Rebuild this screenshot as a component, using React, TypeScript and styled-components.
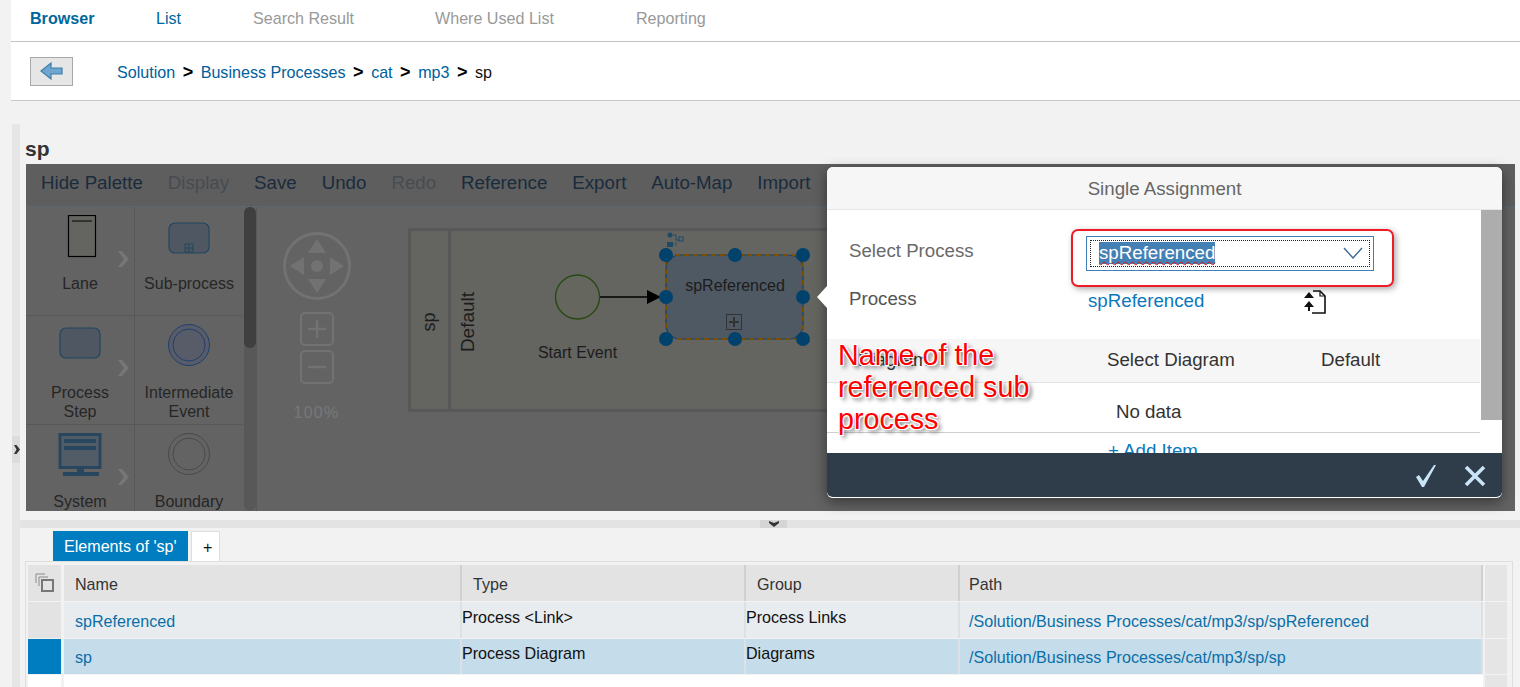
import React from 'react'
import styled, { createGlobalStyle } from 'styled-components'

const GlobalStyle = createGlobalStyle`
  html, body {
    margin: 0;
    padding: 0;
    height: 687px;
    overflow: hidden;
    background: #f2f2f2;
    font-family: "Liberation Sans", Arial, sans-serif;
  }
`

const Page = styled.div`
  width: 1520px;
  height: 687px;
  padding-left: 11px;
  box-sizing: border-box;
  overflow: hidden;
`

const Header = styled.header`
  background: #fff;
  height: 101px;
  box-sizing: border-box;
  border-bottom: 1px solid #c9c9c9;
`

const NavBar = styled.nav`
  display: flex;
  align-items: center;
  height: 42px;
  padding: 0 0 4px 19px;
  box-sizing: border-box;
  border-bottom: 1px solid #c2c2c2;
`

const NavItem = styled.div<{ $width: number; $state?: 'active' | 'link' }>`
  width: ${({ $width }) => $width}px;
  flex: none;
  font-size: 16.1px;
  font-weight: ${({ $state }) => ($state === 'active' ? 700 : 400)};
  color: ${({ $state }) => ($state ? '#00679e' : '#999')};
`

const CrumbBar = styled.div`
  display: flex;
  align-items: center;
  height: 58px;
  padding-left: 19px;
`

const BackButton = styled.button`
  width: 43px;
  height: 29px;
  padding: 0;
  margin-right: 44px;
  display: flex;
  align-items: center;
  justify-content: center;
  background: #e6e6e6;
  border: 1px solid #a8a8a8;
`

const Crumbs = styled.div`
  display: flex;
  align-items: center;
  gap: 7.5px;
  padding-top: 2px;
  font-size: 16.1px;
  color: #00609b;
`

const CrumbSep = styled.span`
  font-weight: 700;
  font-size: 18px;
  line-height: 18px;
  color: #000;
`

const CrumbCurrent = styled.span`
  color: #111;
`

const Main = styled.div`
  display: flex;
  margin-top: 23px;
  height: 563px;
`

const SideStrip = styled.div`
  width: 8px;
  margin-left: 1px;
  flex: none;
  background: #e6e6e6;
  display: flex;
  flex-direction: column;
  padding-top: 312px;
  box-sizing: border-box;
`

const SideHandle = styled.div`
  height: 27px;
  background: #dcdcdc;
  display: flex;
  align-items: center;
  justify-content: center;
  padding-left: 2px;
`

const Content = styled.div`
  flex: 1;
  min-width: 0;
`

const Title = styled.h2`
  margin: 0;
  height: 40px;
  padding: 13px 0 0 5px;
  box-sizing: border-box;
  font-size: 21px;
  line-height: 23px;
  font-weight: 700;
  color: #333;
`

const Panel = styled.section`
  position: relative;
  margin: 0 5px 0 6px;
  height: 347px;
  background: #636363;
  overflow: visible;
`

const Toolbar = styled.div`
  display: flex;
  align-items: center;
  gap: 25px;
  height: 43px;
  padding: 0 0 5px 15px;
  box-sizing: border-box;
  background: #5e5e5e;
  border-bottom: 1px solid #5c6771;
`

const ToolItem = styled.span<{ $disabled?: boolean }>`
  font-size: 18.7px;
  color: ${({ $disabled }) => ($disabled ? '#474c51' : '#1a2b3c')};
`

const Workspace = styled.div`
  display: flex;
  height: 304px;
  overflow: hidden;
`

const Palette = styled.div`
  display: grid;
  grid-template-columns: 109px 108px;
  grid-auto-rows: 109px;
  width: 217px;
  flex: none;
  height: 304px;
  overflow: hidden;
`

const PaletteCell = styled.div<{ $left?: boolean }>`
  position: relative;
  box-sizing: border-box;
  border-bottom: 1px solid #585858;
  border-right: ${({ $left }) => ($left ? '1px solid #585858' : '0')};
  display: flex;
  flex-direction: column;
  align-items: center;
`

const PaletteIcon = styled.svg`
  margin-top: 8px;
  flex: none;
`

const PaletteLabel = styled.div`
  font-size: 16px;
  line-height: 19px;
  color: #262626;
  text-align: center;
  margin-top: 15px;
`

const CellChevron = styled.svg`
  position: absolute;
  right: 3px;
  top: 43px;
`

const PaletteScroll = styled.div`
  width: 12px;
  margin-left: 1px;
  flex: none;
  background: #585858;
  border-radius: 6px;
  height: 304px;
`

const PaletteThumb = styled.div`
  height: 141px;
  background: #3f3f3f;
  border-radius: 6px;
`

const Canvas = styled.div`
  flex: 1;
  min-width: 0;
  display: flex;
  border-left: 1px solid #585858;
`

const Navigator = styled.div`
  width: 119px;
  flex: none;
  display: flex;
  flex-direction: column;
  align-items: center;
  padding-top: 24px;
  box-sizing: border-box;
  color: #787878;
`

const ZoomLabel = styled.div`
  font-size: 16px;
  letter-spacing: 1.3px;
  margin-top: 20px;
`

const ZoomButton = styled.div<{ $gap: number }>`
  width: 34px;
  height: 34px;
  margin-top: ${({ $gap }) => $gap}px;
  box-sizing: border-box;
  border: 2px solid #727272;
  border-radius: 5px;
  display: flex;
  align-items: center;
  justify-content: center;
`

const Diagram = styled.svg`
  flex: none;
  font-family: "Liberation Sans", Arial, sans-serif;
`

const Modal = styled.div`
  position: absolute;
  left: 801px;
  top: 3px;
  width: 675px;
  height: 331px;
  background: #fff;
  border-radius: 6px;
  box-shadow: 0 4px 14px rgba(0, 0, 0, 0.45);
  display: flex;
  flex-direction: column;
`

const ModalArrow = styled.div`
  position: absolute;
  left: -10px;
  top: 119px;
  width: 0;
  height: 0;
  border-top: 11px solid transparent;
  border-bottom: 11px solid transparent;
  border-right: 10px solid #fff;
`

const ModalHeader = styled.div`
  height: 43px;
  flex: none;
  padding-top: 1px;
  background: #f6f6f6;
  border-bottom: 1px solid #e6e6e6;
  border-radius: 6px 6px 0 0;
  box-sizing: border-box;
  display: flex;
  align-items: center;
  justify-content: center;
  font-size: 18.7px;
  color: #666;
`

const ModalBody = styled.div`
  flex: 1;
  min-height: 0;
  display: flex;
  overflow: hidden;
`

const BodyContent = styled.div`
  flex: 1;
  min-width: 0;
`

const FormArea = styled.div`
  height: 129px;
  padding: 26px 0 0 22px;
  box-sizing: border-box;
`

const FieldRow = styled.div<{ $height: number }>`
  display: flex;
  align-items: center;
  height: ${({ $height }) => $height}px;
`

const FieldLabel = styled.div<{ $dark?: boolean }>`
  width: 239px;
  flex: none;
  font-size: 18.7px;
  padding-bottom: ${({ $dark }) => ($dark ? '0' : '6px')};
  color: ${({ $dark }) => ($dark ? '#555' : '#6a6a6a')};
`

const SelectBox = styled.div`
  width: 288px;
  height: 35px;
  box-sizing: border-box;
  border: 1px solid #3f7fb5;
  padding: 3px;
  margin-left: -2px;
`

const SelectInner = styled.div`
  height: 100%;
  box-sizing: border-box;
  border: 1px dotted #222;
  display: flex;
  align-items: center;
  justify-content: space-between;
  padding: 0 6px 2px 8px;
`

const SelectedText = styled.span`
  font-size: 18.7px;
  line-height: 22px;
  background: #4580b4;
  color: #fff;
  text-decoration: underline wavy #e01010 1px;
  text-underline-offset: 2px;
`

const ProcessLink = styled.a`
  font-size: 18.7px;
  padding-top: 4px;
  color: #0a78bd;
  width: 216px;
  flex: none;
`

const ExportIcon = styled.svg`
  margin-top: 6px;
  flex: none;
`

const AssignTable = styled.div`
  font-size: 18.7px;
  color: #333;
`

const AssignHead = styled.div`
  display: grid;
  grid-template-columns: 280px 214px 1fr;
  align-items: center;
  height: 44px;
  box-sizing: border-box;
  background: #f6f6f6;
  border-bottom: 1px solid #e2e2e2;
  padding: 0 0 2px 0;
  width: 653px;
`

const AssignHeadCell = styled.div<{ $indent?: number }>`
  padding-left: ${({ $indent }) => $indent ?? 0}px;
`

const NoData = styled.div`
  height: 50px;
  width: 653px;
  box-sizing: border-box;
  border-bottom: 1px solid #cfcfcf;
  padding: 8px 0 0 289px;
  display: flex;
  align-items: center;
`

const AddItem = styled.div`
  padding: 7px 0 0 281px;
  color: #0a78bd;
`

const ModalScroll = styled.div`
  width: 21px;
  flex: none;
  margin-left: 1px;
`

const ModalThumb = styled.div`
  height: 210px;
  background: #adadad;
`

const ModalFooter = styled.div`
  height: 45px;
  flex: none;
  background: #2f3c49;
  border-bottom: 1px solid #fff;
  border-radius: 0 0 6px 6px;
  display: flex;
  align-items: center;
  justify-content: flex-end;
  gap: 25px;
  padding: 2px 15px 0 0;
  box-sizing: border-box;
`

const RedFrame = styled.div`
  position: absolute;
  left: 244px;
  top: 62px;
  width: 323px;
  height: 58px;
  box-sizing: border-box;
  border: 2px solid #ee1c25;
  border-radius: 7px;
  box-shadow: 2px 2px 6px rgba(0, 0, 0, 0.35);
  pointer-events: none;
`

const Annotation = styled.div`
  position: absolute;
  left: 11px;
  top: 172px;
  font-size: 28.7px;
  line-height: 32px;
  color: #f00;
  text-shadow: 1px 1px 0 #fff, -1px -1px 0 #fff, 1px -1px 0 #fff, -1px 1px 0 #fff, 3px 3px 4px rgba(0, 0, 0, 0.6);
`

const Splitter = styled.div`
  margin-top: 9px;
  height: 8px;
  background: #e3e3e3;
  display: flex;
  justify-content: center;
  padding-left: 7px;
`

const SplitHandle = styled.div`
  width: 27px;
  background: #d5d5d5;
  display: flex;
  align-items: center;
  justify-content: center;
`

const TabRow = styled.div`
  display: flex;
  align-items: flex-end;
  gap: 3px;
  height: 33px;
  padding-left: 33px;
  box-sizing: border-box;
`

const Tab = styled.div<{ $active?: boolean }>`
  height: 30px;
  box-sizing: border-box;
  padding: 1px 11px 0;
  display: flex;
  align-items: center;
  font-size: 16.1px;
  background: ${({ $active }) => ($active ? '#007cc0' : '#fff')};
  color: ${({ $active }) => ($active ? '#fff' : '#111')};
  border: ${({ $active }) => ($active ? '0' : '1px solid #ddd')};
  border-bottom: 0;
  width: ${({ $active }) => ($active ? '135px' : '29px')};
`

const TableFrame = styled.div`
  margin-left: 5px;
  width: 1488px;
  height: 130px;
  box-sizing: border-box;
  border: 1px solid #dedede;
  border-bottom: 0;
  padding: 3px 0 0 2px;
`

const Row = styled.div<{ $height: number; $gapAfter?: number }>`
  display: grid;
  grid-template-columns: 36px 398px 284px 214px 523px 2px 22px;
  height: ${({ $height }) => $height}px;
  margin-bottom: ${({ $gapAfter }) => $gapAfter ?? 1}px;
  font-size: 16.1px;
`

const RowSelector = styled.div<{ $bg: string }>`
  width: 33px;
  background: ${({ $bg }) => $bg};
  display: flex;
  align-items: center;
  justify-content: center;
`

const HeadCell = styled.div<{ $pad?: number }>`
  background: #e3e3e3;
  color: #333;
  display: flex;
  align-items: center;
  padding: 2px 0 0 ${({ $pad }) => $pad ?? 11}px;
  border-right: 2px solid #cfcfcf;
  box-sizing: border-box;
`

const BodyCell = styled.div<{ $selected?: boolean; $top?: boolean; $link?: boolean; $pad?: number }>`
  background: ${({ $selected }) => ($selected ? '#c5dcea' : '#e8ecef')};
  border-right: 2px solid #dde1e4;
  box-sizing: border-box;
  display: flex;
  align-items: ${({ $top }) => ($top ? 'flex-start' : 'center')};
  padding-left: ${({ $top, $pad }) => ($top ? 0 : $pad ?? 11)}px;
  padding-top: ${({ $top, $selected }) => {
    if ($top) return $selected ? '5px' : '6px'
    return $selected ? '1px' : '3px'
  }};
  color: ${({ $link }) => ($link ? '#0a6fa8' : '#111')};
`

const EndCell = styled.div<{ $column: number }>`
  grid-column: ${({ $column }) => $column};
  background: #e5e5e5;
`

const FillCell = styled.div`
  grid-column: span 4;
  background: #fff;
`

const LaneIcon = () => (
  <PaletteIcon width="36" height="44" viewBox="0 0 36 44">
    <rect x="6.5" y="0.5" width="27" height="41" fill="#646461" stroke="#000" strokeWidth="1.2" />
    <line x1="10" y1="6" x2="30" y2="6" stroke="#000" strokeWidth="1" />
  </PaletteIcon>
)

const SubProcessIcon = () => (
  <PaletteIcon width="42" height="44" viewBox="0 0 42 44">
    <rect x="1" y="8" width="40" height="30" rx="6" fill="#4f5862" stroke="#23465f" strokeWidth="1.2" />
    <rect x="17" y="29" width="8" height="8" fill="none" stroke="#23465f" />
    <path d="M21 29v8M17 33h8" stroke="#23465f" />
  </PaletteIcon>
)

const StepIcon = () => (
  <PaletteIcon width="42" height="44" viewBox="0 0 42 44">
    <rect x="1" y="4" width="40" height="30" rx="6" fill="#4f5862" stroke="#23465f" strokeWidth="1.2" />
  </PaletteIcon>
)

const EventIcon = ({ stroke, fill }: { stroke: string; fill: string }) => (
  <PaletteIcon width="44" height="44" viewBox="0 0 44 44">
    <circle cx="22" cy="21" r="20.5" fill={fill} stroke={stroke} />
    <circle cx="22" cy="21" r="16" fill={fill} stroke={stroke} />
  </PaletteIcon>
)

const SystemIcon = () => (
  <PaletteIcon width="44" height="44" viewBox="0 0 44 44">
    <rect x="2" y="1.5" width="40" height="33" fill="#525c66" stroke="#29465f" strokeWidth="3" />
    <rect x="6" y="6" width="32" height="4" fill="#29465f" />
    <rect x="6" y="13" width="32" height="4" fill="#29465f" />
    <rect x="19" y="35" width="7" height="4" fill="#29465f" />
    <rect x="5" y="39" width="36" height="4" fill="#29465f" />
  </PaletteIcon>
)

const Chevron = () => (
  <CellChevron width="14" height="18" viewBox="0 0 14 18">
    <path d="M1 1h4l7 8-7 8H1l6-8z" fill="#767676" />
  </CellChevron>
)

const paletteItems = [
  { label: ['Lane'], icon: <LaneIcon />, left: true },
  { label: ['Sub-process'], icon: <SubProcessIcon /> },
  { label: ['Process', 'Step'], icon: <StepIcon />, left: true },
  { label: ['Intermediate', 'Event'], icon: <EventIcon stroke="#1f4070" fill="#575c68" /> },
  { label: ['System'], icon: <SystemIcon />, left: true },
  { label: ['Boundary'], icon: <EventIcon stroke="#4a4a4a" fill="#636363" /> },
]

const toolItems = [
  { label: 'Hide Palette' },
  { label: 'Display', disabled: true },
  { label: 'Save' },
  { label: 'Undo' },
  { label: 'Redo', disabled: true },
  { label: 'Reference' },
  { label: 'Export' },
  { label: 'Auto-Map' },
  { label: 'Import' },
]

const handles = [
  [666, 255], [735, 255], [803, 255],
  [666, 297], [803, 297],
  [666, 339], [735, 339], [803, 339],
]

// diagram coordinates are page coordinates, the svg is shifted by the viewBox
const ProcessDiagram = () => (
  <Diagram width="500" height="304" viewBox="376 207 500 304">
    <rect x="409.5" y="229.5" width="440" height="181" fill="#646461" stroke="#585858" strokeWidth="3" />
    <line x1="449.5" y1="229" x2="449.5" y2="411" stroke="#585858" strokeWidth="3" />
    <text x="435" y="322" fontSize="18" fill="#1c1c1c" textAnchor="middle" transform="rotate(-90 435 322)">sp</text>
    <text x="474" y="322" fontSize="19" fill="#1c1c1c" textAnchor="middle" transform="rotate(-90 474 322)">Default</text>
    <circle cx="577.5" cy="297" r="22" fill="#65675e" stroke="#274a12" strokeWidth="1.4" />
    <text x="577.5" y="358" fontSize="16" fill="#1c1c1c" textAnchor="middle">Start Event</text>
    <line x1="600" y1="297" x2="650" y2="297" stroke="#000" strokeWidth="1.4" />
    <path d="M647 290l14 7-14 7z" fill="#000" />
    <rect x="666" y="255" width="137" height="84" rx="14" fill="#4f5963" stroke="#1d4058" strokeWidth="1.2" />
    <rect x="666" y="255" width="137" height="84" fill="none" stroke="#7a4d00" strokeWidth="2" strokeDasharray="5 4" />
    <text x="735" y="291" fontSize="16" fill="#1c1c1c" textAnchor="middle">spReferenced</text>
    <rect x="726.5" y="314.5" width="15" height="15" fill="none" stroke="#333" strokeWidth="1" />
    <path d="M734 317v10M729 322h10" stroke="#333" strokeWidth="2" />
    {handles.map(([cx, cy]) => (
      <circle key={`${cx}-${cy}`} cx={cx} cy={cy} r="7" fill="#00426c" />
    ))}
    <circle cx="670" cy="235" r="2.5" fill="#1f4a66" />
    <rect x="667" y="242" width="6" height="5" fill="#1f4a66" />
    <path d="M673 235h3v5h3" fill="none" stroke="#1f4a66" />
    <rect x="679" y="237" width="4" height="4" fill="none" stroke="#1f4a66" />
    <path d="M673 244h3M676 241v6" stroke="#1f4a66" strokeDasharray="1 1" />
  </Diagram>
)

const NavigatorWheel = () => (
  <svg width="70" height="70" viewBox="0 0 70 70">
    <circle cx="35" cy="35" r="32.5" fill="none" stroke="#727272" strokeWidth="3" />
    <circle cx="35" cy="35" r="6" fill="#727272" />
    <path d="M35 8l9 14H26zM35 62l-9-14h18zM8 35l14-9v18zM62 35l-14 9V26z" fill="#727272" />
  </svg>
)

export default function App() {
  return (
    <Page>
      <GlobalStyle />
      <Header>
        <NavBar>
          <NavItem $width={126} $state="active">Browser</NavItem>
          <NavItem $width={97} $state="link">List</NavItem>
          <NavItem $width={182}>Search Result</NavItem>
          <NavItem $width={201}>Where Used List</NavItem>
          <NavItem $width={100}>Reporting</NavItem>
        </NavBar>
        <CrumbBar>
          <BackButton>
            <svg width="24" height="18" viewBox="0 0 24 18">
              <path d="M1 9l10-8v5h11v6H11v5z" fill="#6ea6d0" stroke="#3f7ea8" strokeWidth="1.2" />
            </svg>
          </BackButton>
          <Crumbs>
            <span>Solution</span>
            <CrumbSep>&gt;</CrumbSep>
            <span>Business Processes</span>
            <CrumbSep>&gt;</CrumbSep>
            <span>cat</span>
            <CrumbSep>&gt;</CrumbSep>
            <span>mp3</span>
            <CrumbSep>&gt;</CrumbSep>
            <CrumbCurrent>sp</CrumbCurrent>
          </Crumbs>
        </CrumbBar>
      </Header>
      <Main>
        <SideStrip>
          <SideHandle>
            <svg width="6" height="9" viewBox="0 0 6 9">
              <path d="M0 0h2.5L6 4.5 2.5 9H0l2.5-4.5z" fill="#333" />
            </svg>
          </SideHandle>
        </SideStrip>
        <Content>
          <Title>sp</Title>
          <Panel>
            <Toolbar>
              {toolItems.map((item) => (
                <ToolItem key={item.label} $disabled={item.disabled}>{item.label}</ToolItem>
              ))}
            </Toolbar>
            <Workspace>
              <Palette>
                {paletteItems.map((item) => (
                  <PaletteCell key={item.label[0]} $left={item.left}>
                    {item.icon}
                    <PaletteLabel>
                      {item.label.map((line) => (
                        <div key={line}>{line}</div>
                      ))}
                    </PaletteLabel>
                    {item.left && <Chevron />}
                  </PaletteCell>
                ))}
              </Palette>
              <PaletteScroll>
                <PaletteThumb />
              </PaletteScroll>
              <Canvas>
                <Navigator>
                  <NavigatorWheel />
                  <ZoomButton $gap={11}>
                    <svg width="22" height="22" viewBox="0 0 22 22">
                      <path d="M11 2v18M2 11h18" stroke="#727272" strokeWidth="2.5" />
                    </svg>
                  </ZoomButton>
                  <ZoomButton $gap={4}>
                    <svg width="22" height="22" viewBox="0 0 22 22">
                      <path d="M2 11h18" stroke="#727272" strokeWidth="2.5" />
                    </svg>
                  </ZoomButton>
                  <ZoomLabel>100%</ZoomLabel>
                </Navigator>
                <ProcessDiagram />
              </Canvas>
            </Workspace>
            <Modal>
              <ModalArrow />
              <ModalHeader>Single Assignment</ModalHeader>
              <ModalBody>
                <BodyContent>
                  <FormArea>
                    <FieldRow $height={35}>
                      <FieldLabel>Select Process</FieldLabel>
                      <SelectBox>
                        <SelectInner>
                          <SelectedText>spReferenced</SelectedText>
                          <svg width="20" height="12" viewBox="0 0 20 12">
                            <path d="M1 1l9 10 9-10" fill="none" stroke="#3a6a96" strokeWidth="1.4" />
                          </svg>
                        </SelectInner>
                      </SelectBox>
                    </FieldRow>
                    <FieldRow $height={55}>
                      <FieldLabel $dark>Process</FieldLabel>
                      <ProcessLink>spReferenced</ProcessLink>
                      <ExportIcon width="22" height="24" viewBox="0 0 22 24">
                        <path d="M9 1h7l5 5v17H8" fill="none" stroke="#111" strokeWidth="1.6" />
                        <path d="M16 1v5h5" fill="none" stroke="#111" strokeWidth="1.2" />
                        <path d="M5 2l5 6H0zM5 11l5 6H0z" fill="#111" />
                        <rect x="4" y="17" width="2" height="4" fill="#111" />
                      </ExportIcon>
                    </FieldRow>
                  </FormArea>
                  <AssignTable>
                    <AssignHead>
                      <AssignHeadCell $indent={31}>Diagram</AssignHeadCell>
                      <AssignHeadCell>Select Diagram</AssignHeadCell>
                      <AssignHeadCell>Default</AssignHeadCell>
                    </AssignHead>
                    <NoData>No data</NoData>
                    <AddItem>+ Add Item</AddItem>
                  </AssignTable>
                </BodyContent>
                <ModalScroll>
                  <ModalThumb />
                </ModalScroll>
              </ModalBody>
              <ModalFooter>
                <svg width="24" height="24" viewBox="0 0 24 24">
                  <path d="M2 13l3-2 4 6L20 1h2L10 23H8z" fill="#c9e4f7" />
                </svg>
                <svg width="24" height="24" viewBox="0 0 24 24">
                  <path d="M3 3l18 18M21 3L3 21" stroke="#c9e4f7" strokeWidth="3.6" />
                </svg>
              </ModalFooter>
              <RedFrame />
              <Annotation>
                Name of the
                <br />
                referenced sub
                <br />
                process
              </Annotation>
            </Modal>
          </Panel>
          <Splitter>
            <SplitHandle>
              <svg width="10" height="6" viewBox="0 0 10 6">
                <path d="M0 0l5 2 5-2v2L5 6 0 2z" fill="#333" />
              </svg>
            </SplitHandle>
          </Splitter>
          <TabRow>
            <Tab $active>Elements of 'sp'</Tab>
            <Tab>+</Tab>
          </TabRow>
          <TableFrame>
            <Row $height={36}>
              <RowSelector $bg="#e3e3e3">
                <svg width="20" height="20" viewBox="0 0 20 20">
                  <path d="M1 10V1h9M4 13V4h9" fill="none" stroke="#8a8a8a" />
                  <rect x="7" y="7" width="11" height="11" fill="none" stroke="#777" strokeWidth="2" />
                </svg>
              </RowSelector>
              <HeadCell>Name</HeadCell>
              <HeadCell>Type</HeadCell>
              <HeadCell>Group</HeadCell>
              <HeadCell $pad={9}>Path</HeadCell>
              <EndCell $column={7} />
            </Row>
            <Row $height={36}>
              <RowSelector $bg="#e3e3e3" />
              <BodyCell $link>spReferenced</BodyCell>
              <BodyCell $top>Process &lt;Link&gt;</BodyCell>
              <BodyCell $top>Process Links</BodyCell>
              <BodyCell $link $pad={9}>/Solution/Business Processes/cat/mp3/sp/spReferenced</BodyCell>
              <EndCell $column={7} />
            </Row>
            <Row $height={35}>
              <RowSelector $bg="#007cc0" />
              <BodyCell $selected $link>sp</BodyCell>
              <BodyCell $selected $top>Process Diagram</BodyCell>
              <BodyCell $selected $top>Diagrams</BodyCell>
              <BodyCell $selected $link $pad={9}>/Solution/Business Processes/cat/mp3/sp/sp</BodyCell>
              <EndCell $column={7} />
            </Row>
            <Row $height={20} $gapAfter={0}>
              <RowSelector $bg="#fff" />
              <FillCell />
              <EndCell $column={7} />
            </Row>
          </TableFrame>
        </Content>
      </Main>
    </Page>
  )
}
